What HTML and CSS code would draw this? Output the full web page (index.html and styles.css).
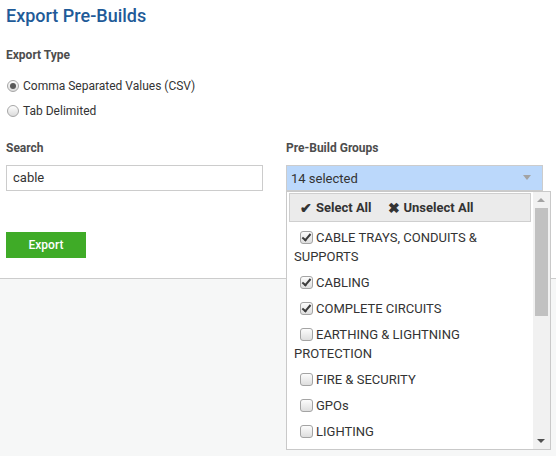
FILE: index.html
```html
<!DOCTYPE html>
<html>
<head>
<meta charset="utf-8">
<link rel="stylesheet" href="styles.css">
</head>
<body>
<div class="page">
  <section class="top">
    <h1 class="title">Export Pre-Builds</h1>
    <div class="label label-type">Export Type</div>
    <div class="radio-row"><span class="radio checked"></span>Comma Separated Values (CSV)</div>
    <div class="radio-row"><span class="radio"></span>Tab Delimited</div>
    <div class="cols">
      <div class="col">
        <div class="label">Search</div>
        <div class="input">cable</div>
      </div>
      <div class="col">
        <div class="label">Pre-Build Groups</div>
        <div class="select-wrap">
          <div class="select">14 selected<span class="caret"></span></div>
          <div class="menu">
            <div class="menu-body">
              <div class="menu-head">
                <span class="act"><span class="ico">✔</span>Select All</span>
                <span class="act"><span class="ico">✖</span>Unselect All</span>
              </div>
              <div class="item"><span class="cb on"></span>CABLE TRAYS, CONDUITS &amp; SUPPORTS</div>
              <div class="item"><span class="cb on"></span>CABLING</div>
              <div class="item"><span class="cb on"></span>COMPLETE CIRCUITS</div>
              <div class="item"><span class="cb"></span>EARTHING &amp; LIGHTNING PROTECTION</div>
              <div class="item"><span class="cb"></span>FIRE &amp; SECURITY</div>
              <div class="item"><span class="cb"></span>GPOs</div>
              <div class="item"><span class="cb"></span>LIGHTING</div>
            </div>
            <div class="sbar">
              <span class="arr up"></span>
              <span class="thumb"></span>
              <span class="arr down"></span>
            </div>
          </div>
        </div>
      </div>
    </div>
    <button class="export">Export</button>
  </section>
  <section class="lower"></section>
</div>
</body>
</html>
```

FILE: styles.css
```css
* { box-sizing: border-box; }
html, body { margin: 0; padding: 0; height: 100%; }
body {
  font-family: Roboto, "Liberation Sans", Arial, sans-serif;
  color: #333;
  background: #f6f7f7;
}
.page { display: flex; flex-direction: column; min-height: 100%; }
.top {
  background: #fff;
  padding: 0 6px 20px 6px;
}
.title {
  margin: 0;
  font-size: 18px;
  font-weight: 500;
  line-height: 32px;
  color: #1f5b98;
}
.label {
  font-size: 12px;
  font-weight: 700;
  line-height: 16px;
  color: #4d4d4d;
}
.label-type { margin-top: 15px; margin-bottom: 10px; }
.radio-row {
  display: flex;
  align-items: center;
  height: 25px;
  font-size: 12px;
  color: #333;
}
.radio {
  width: 12px; height: 12px;
  border-radius: 50%;
  border: 1px solid #a6a6a6;
  background: linear-gradient(#fdfdfd, #dcdcdc);
  margin: 0 4px 0 1px;
  position: relative;
  flex: none;
}
.radio.checked::after {
  content: "";
  position: absolute;
  left: 2px; top: 2px;
  width: 6px; height: 6px;
  border-radius: 50%;
  background: #5a5a5a;
}
.cols {
  display: grid;
  grid-template-columns: 257px 257px;
  column-gap: 23px;
  margin-top: 17px;
}
.col .label { margin-bottom: 9px; }
.input {
  height: 26px;
  border: 1px solid #ccc;
  padding: 0 6px;
  font-size: 13px;
  line-height: 24px;
  color: #333;
}
.select-wrap { position: relative; }
.select {
  height: 26px;
  border: 1px solid #ccc;
  background: #bbd8fb;
  padding: 0 4px;
  font-size: 13px;
  line-height: 25px;
  color: #333;
  position: relative;
}
.caret {
  position: absolute;
  right: 11px; top: 9px;
  width: 0; height: 0;
  border-left: 4px solid transparent;
  border-right: 4px solid transparent;
  border-top: 5px solid #a3a3a3;
}
.menu {
  position: absolute;
  left: 0; top: 26px;
  width: 265px; height: 259px;
  background: #fff;
  border: 1px solid #c9c9c9;
  display: flex;
  z-index: 5;
}
.menu-body { flex: 1; overflow: hidden; }
.menu-head {
  margin: 1px 2px 2px 2px;
  height: 29px;
  border: 1px solid #cfcfcf;
  background: #ebebeb;
  display: flex;
  align-items: center;
  padding-left: 10px;
  gap: 16px;
  font-size: 13px;
  font-weight: 700;
  color: #333;
}
.act { display: flex; align-items: center; }
.ico { font-size: 14px; margin-right: 4px; color: #333; }
.item {
  padding: 4px 8px 3px 7px;
  font-size: 13px;
  line-height: 19px;
  color: #333;
}
.cb {
  display: inline-block;
  width: 13px; height: 13px;
  margin: 0 3px 0 6px;
  border: 1px solid #a4a4a4;
  border-radius: 3px;
  background: linear-gradient(#fcfcfc, #dedede);
  vertical-align: -2px;
  position: relative;
}
.cb.on::after {
  content: "";
  position: absolute;
  left: 3px; top: 0px;
  width: 3px; height: 7px;
  border-right: 2px solid #3c3c3c;
  border-bottom: 2px solid #3c3c3c;
  transform: rotate(40deg);
}
.sbar {
  width: 17px;
  flex: none;
  background: #f1f1f1;
  position: relative;
}
.arr {
  position: absolute;
  left: 4px;
  width: 0; height: 0;
  border-left: 4px solid transparent;
  border-right: 4px solid transparent;
}
.arr.up { top: 6px; border-bottom: 4px solid #a3a3a3; }
.arr.down { bottom: 6px; border-top: 4px solid #505050; }
.thumb {
  position: absolute;
  left: 2px; top: 16px;
  width: 13px; height: 108px;
  background: #c1c1c1;
}
.export {
  display: block;
  margin-top: 41px;
  width: 80px; height: 26px;
  border: none;
  background: #3fab27;
  color: #fff;
  font-family: Roboto, "Liberation Sans", Arial, sans-serif;
  font-size: 12px;
  font-weight: 500;
  padding: 0;
}
.lower {
  flex: 1;
  border-top: 1px solid #ccc;
  background: #f6f7f7;
}
```
